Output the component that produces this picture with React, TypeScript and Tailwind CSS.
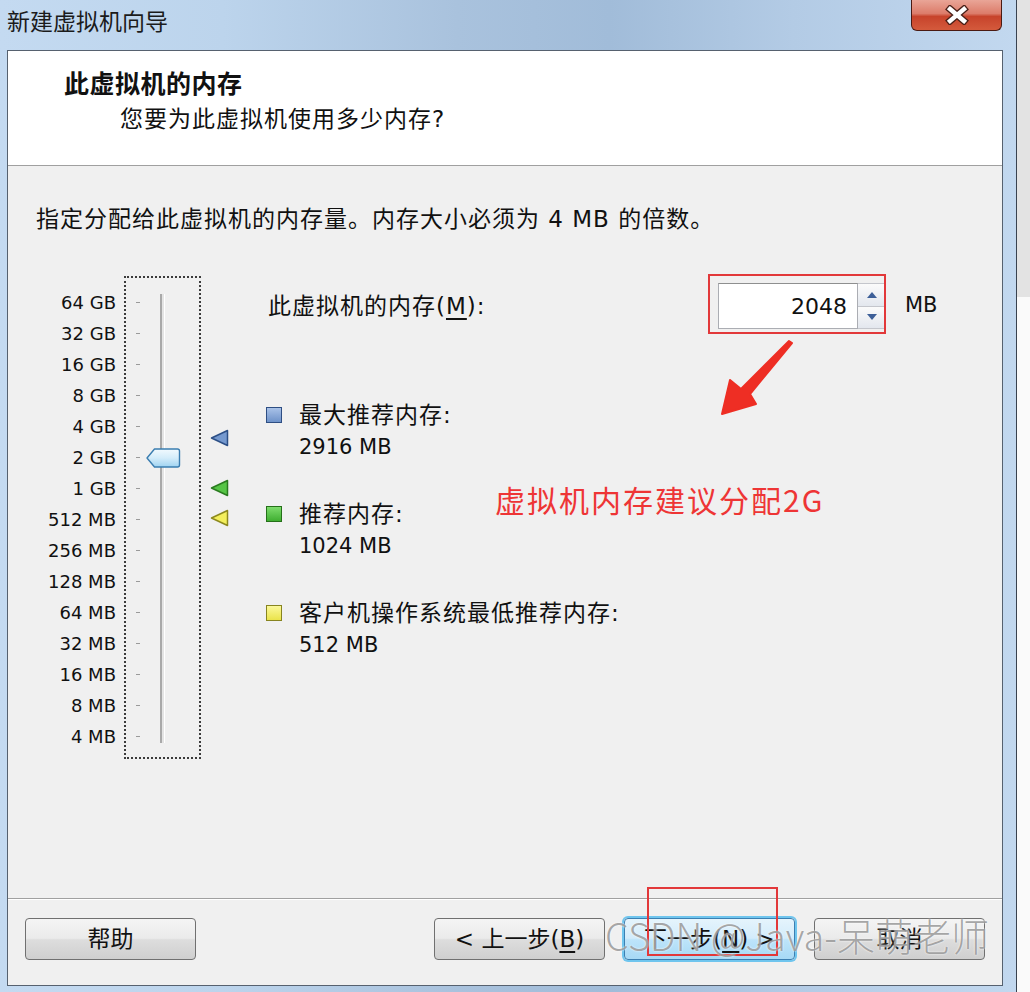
const ui = "font-['DejaVu_Sans','Noto_Sans_CJK_SC',sans-serif]"

const scale = [
  '64 GB', '32 GB', '16 GB', '8 GB', '4 GB', '2 GB', '1 GB', '512 MB',
  '256 MB', '128 MB', '64 MB', '32 MB', '16 MB', '8 MB', '4 MB',
]

function Marker({ fill, stroke }: { fill: string; stroke: string }) {
  return (
    <svg width="19" height="18" viewBox="0 0 19 18">
      <polygon points="1.5,9 17.5,1.5 17.5,16.5" fill={fill} stroke={stroke} strokeWidth="1.5" strokeLinejoin="round" />
    </svg>
  )
}

function Thumb() {
  return (
    <svg width="35" height="20" viewBox="0 0 35 20">
      <defs>
        <linearGradient id="th" x1="0" y1="0" x2="0" y2="1">
          <stop offset="0" stopColor="#f2fafe" />
          <stop offset="0.5" stopColor="#d3ecfa" />
          <stop offset="1" stopColor="#9fd3f1" />
        </linearGradient>
      </defs>
      <path d="M1 10 L8.5 1 H31.5 Q33.5 1 33.5 3 V17 Q33.5 19 31.5 19 H8.5 Z" fill="url(#th)" stroke="#3a7db0" strokeWidth="1.4" strokeLinejoin="round" />
    </svg>
  )
}

function Button({ children, primary }: { children: React.ReactNode; primary?: boolean }) {
  return (
    <div
      className={
        primary
          ? 'w-[171px] h-[42px] rounded-[4px] border border-[#3c7fb1] shadow-[0_0_0_2px_#6fc5ee] bg-[linear-gradient(#e5f4fc_0%,#d3ecfb_48%,#bde4fa_52%,#a7d9f5_100%)] flex items-center justify-center text-[23px] text-[#111]'
          : 'w-[171px] h-[42px] rounded-[4px] border border-[#707070] bg-[linear-gradient(#f4f4f4_0%,#ebebeb_48%,#dddddd_52%,#cfcfcf_100%)] flex items-center justify-center text-[23px] text-[#111]'
      }
    >
      {children}
    </div>
  )
}

function Legend({ fill, stroke, title, value }: { fill: string; stroke: string; title: string; value: string }) {
  return (
    <div className="flex">
      <div className="h-[30px] w-[35px] flex items-center">
        <div className="w-[16px] h-[16px] border" style={{ background: fill, borderColor: stroke }} />
      </div>
      <div className="flex flex-col text-[#111]">
        <div className="h-[30px] flex items-center ml-[-2px] text-[23px] tracking-[1px]">{title}</div>
        <div className="h-[30px] pt-[5px] flex items-center ml-[-2px] text-[21px]">{value}</div>
      </div>
    </div>
  )
}

export default function App() {
  return (
    <div className={`relative w-[1030px] h-[992px] overflow-hidden bg-[#f4f4f4] flex ${ui}`}>
      {/* window frame */}
      <div className="w-[1017px] h-full flex flex-col border-r border-[#39424f] bg-[linear-gradient(90deg,#c4daf1_0%,#bcd4ec_22%,#a9c2dd_45%,#a1bcd9_60%,#b3cbe5_78%,#c2d8ef_100%)]">
        {/* title bar */}
        <div className="h-[50px] flex items-start justify-between pl-[7px] pr-[14px]">
          <span className="mt-[9px] text-[23px] leading-none text-[#1b1b1b] font-['Noto_Sans_CJK_SC',sans-serif]">
            新建虚拟机向导
          </span>
          <div className="w-[91px] h-[31px] rounded-b-[6px] border border-t-0 border-[#4a1a12] bg-[linear-gradient(#e9a597_0%,#dc7c6a_45%,#c7432b_55%,#d45a3c_100%)] flex items-center justify-center">
            <svg width="24" height="20" viewBox="0 0 24 20">
              <path d="M5 4 L19 16 M19 4 L5 16" stroke="#4a2018" strokeWidth="7" strokeLinecap="square" />
              <path d="M5 4 L19 16 M19 4 L5 16" stroke="#ffffff" strokeWidth="4.4" strokeLinecap="square" />
            </svg>
          </div>
        </div>

        {/* client area */}
        <div className="ml-[7px] mr-[13px] flex-1 border border-[#56616f] bg-[#f0f0f0] flex flex-col">
          {/* header */}
          <div className="h-[115px] bg-white border-b border-[#a0a0a0] pt-[21px] pl-[56px]">
            <div className="text-[25px] font-bold leading-none tracking-[0.5px] text-[#111]">此虚拟机的内存</div>
            <div className="mt-[11px] ml-[56px] text-[23px] leading-none tracking-[1px] text-[#111]">您要为此虚拟机使用多少内存?</div>
          </div>

          {/* body */}
          <div className="flex-1 pl-[28px] pt-[42px]">
            <div className="text-[23px] leading-none tracking-[1px] text-[#111]">
              指定分配给此虚拟机的内存量。内存大小必须为 4 MB 的倍数。
            </div>

            <div className="mt-[45px] flex">
              {/* scale labels */}
              <div className="w-[80px] pt-[11px] flex flex-col items-end">
                {scale.map((s) => (
                  <div key={s} className="h-[31px] flex items-center text-[18px] text-[#111] whitespace-nowrap">
                    {s}
                  </div>
                ))}
              </div>

              {/* slider box */}
              <div className="relative ml-[8px] w-[77px] h-[483px] border-2 border-dotted border-[#3b3b3b] pt-[9px]">
                <div className="absolute left-[34px] top-[16px] w-[5px] h-[449px] border-l-2 border-[#a9a9a9] bg-[#e4e4e4] border-r border-r-white" />
                {scale.map((s) => (
                  <div key={s} className="relative h-[31px] flex items-center">
                    <div className="ml-[10px] w-[4px] h-[1px] bg-[#9a9a9a]" />
                    {s === '2 GB' && (
                      <div className="absolute left-[20px] top-[6px]">
                        <Thumb />
                      </div>
                    )}
                  </div>
                ))}
              </div>

              {/* recommendation markers */}
              <div className="relative ml-[8px] w-[22px]">
                <div className="absolute left-[1px] top-[153px]">
                  <Marker fill="#7599cf" stroke="#2c4f86" />
                </div>
                <div className="absolute left-[1px] top-[203px]">
                  <Marker fill="#56c546" stroke="#2a7b1f" />
                </div>
                <div className="absolute left-[1px] top-[233px]">
                  <Marker fill="#f3ef5c" stroke="#8d891d" />
                </div>
              </div>

              {/* right side */}
              <div className="flex flex-col">
                <div className="mt-[7px] h-[46px] flex items-center">
                  <div className="w-[487px] pl-[37px] text-[23px] tracking-[1px] text-[#111]">
                    此虚拟机的内存(<span className="underline underline-offset-4">M</span>):
                  </div>
                  <div className="w-[140px] h-[46px] border border-[#abadb3] border-t-[#8e8f8f] bg-white flex items-center justify-end pr-[10px] text-[22px] text-[#111]">
                    2048
                  </div>
                  <div className="w-[28px] h-[46px] flex flex-col">
                    <div className="flex-1 border border-[#c4c6cc] border-l-0 bg-[linear-gradient(#fbfbfb,#e3e7ee)] flex items-center justify-center">
                      <svg width="10" height="6" viewBox="0 0 10 6"><polygon points="0,6 5,0 10,6" fill="#3d5f98" /></svg>
                    </div>
                    <div className="flex-1 border border-t-0 border-l-0 border-[#c4c6cc] bg-[linear-gradient(#fbfbfb,#e3e7ee)] flex items-center justify-center">
                      <svg width="10" height="6" viewBox="0 0 10 6"><polygon points="0,0 10,0 5,6" fill="#3d5f98" /></svg>
                    </div>
                  </div>
                  <div className="ml-[19px] text-[21px] text-[#111]">MB</div>
                </div>

                <div className="mt-[71px] ml-[35px] flex flex-col gap-[39px]">
                  <Legend fill="linear-gradient(#a9c2e8,#6e92c9)" stroke="#2e4e83" title="最大推荐内存:" value="2916 MB" />
                  <Legend fill="linear-gradient(#7ddc6c,#3fae31)" stroke="#257019" title="推荐内存:" value="1024 MB" />
                  <Legend fill="linear-gradient(#fbf89a,#eae34a)" stroke="#878420" title="客户机操作系统最低推荐内存:" value="512 MB" />
                </div>
              </div>
            </div>
          </div>

          {/* buttons */}
          <div className="h-[87px] border-t border-[#a0a0a0] shadow-[inset_0_1px_0_#ffffff] flex pt-[19px] pl-[17px] pr-[17px]">
            <Button>帮助</Button>
            <div className="ml-auto flex gap-[19px]">
              <Button>
                &lt; 上一步(<span className="underline underline-offset-4">B</span>)
              </Button>
              <Button primary>
                下一步(<span className="underline underline-offset-4">N</span>) &gt;
              </Button>
              <Button>取消</Button>
            </div>
          </div>
        </div>
        <div className="h-[6px]" />
      </div>

      {/* strip of the window behind */}
      <div className="flex-1 flex flex-col">
        <div className="h-[297px] bg-[#e3e3e3]" />
        <div className="flex-1 bg-[#fafafa]" />
      </div>

      {/* annotations */}
      <div className="absolute left-[708px] top-[274px] w-[178px] h-[60px] border-2 border-[#e2383a]" />
      <div className="absolute left-[647px] top-[887px] w-[131px] h-[69px] border-2 border-[#e2383a]" />
      <svg className="absolute left-[715px] top-[338px]" width="85" height="82" viewBox="715 338 85 82">
        <polygon points="792,343 750,394 756,404 722,414 730,380 741,389 789,341" fill="#ee2e24" stroke="#ee2e24" strokeWidth="2" strokeLinejoin="round" />
      </svg>
      <div className="absolute left-[495px] top-[484px] text-[30px] leading-none tracking-[2px] text-[#ee3535] font-['Noto_Sans_CJK_SC',sans-serif]">
        虚拟机内存建议分配2G
      </div>
      <div className="absolute left-[605px] top-[916px] text-[38px] leading-none text-[#8a8a8a]/75 font-light [text-shadow:0_0_2px_#ffffff] font-['Noto_Sans_CJK_SC',sans-serif] whitespace-nowrap">
        CSDN @Java-呆萌老师
      </div>
    </div>
  )
}
